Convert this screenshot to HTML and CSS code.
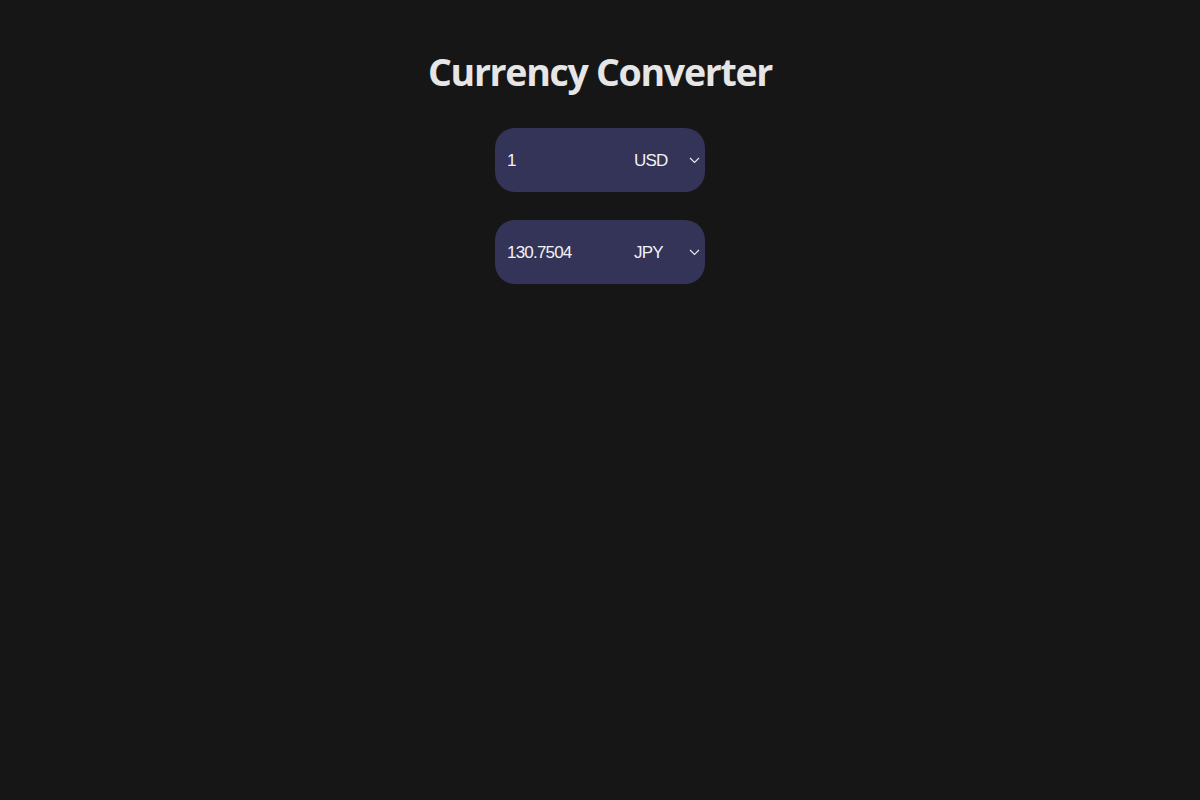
FILE: index.html
```html
<!DOCTYPE html>
<html>
<head>
<meta charset="utf-8">
<link rel="stylesheet" href="styles.css">
</head>
<body>
<main class="app">
  <h1 class="title">Currency Converter</h1>
  <div class="row">
    <span class="amount">1</span>
    <span class="currency">USD</span>
    <svg class="chev" width="11" height="7" viewBox="0 0 11 7"><path d="M1 1 L5.5 5.5 L10 1" fill="none" stroke="#e8e8f0" stroke-width="1.2"/></svg>
  </div>
  <div class="row">
    <span class="amount">130.7504</span>
    <span class="currency">JPY</span>
    <svg class="chev" width="11" height="7" viewBox="0 0 11 7"><path d="M1 1 L5.5 5.5 L10 1" fill="none" stroke="#e8e8f0" stroke-width="1.2"/></svg>
  </div>
</main>
</body>
</html>
```
FILE: styles.css
```css
html, body {
  margin: 0;
  padding: 0;
  background: #161616;
  height: 100%;
}
.app {
  display: flex;
  flex-direction: column;
  align-items: center;
  padding-top: 48px;
}
.title {
  margin: 0 0 32px;
  font-family: "Open Sans", sans-serif;
  font-weight: 700;
  font-size: 37.5px;
  line-height: 48px;
  color: #e6e6e6;
  letter-spacing: -1.3px;
}
.row {
  width: 210px;
  height: 64px;
  box-sizing: border-box;
  border-radius: 20px;
  background: #343358;
  display: flex;
  align-items: center;
  padding: 1px 5px 0 12px;
  margin-bottom: 28px;
  font-family: "Liberation Sans", Arial, sans-serif;
  font-size: 17px;
  letter-spacing: -0.8px;
  color: #f2f2f5;
}
.amount {
  width: 127px;
}
.currency {
  flex: 1;
}
```
